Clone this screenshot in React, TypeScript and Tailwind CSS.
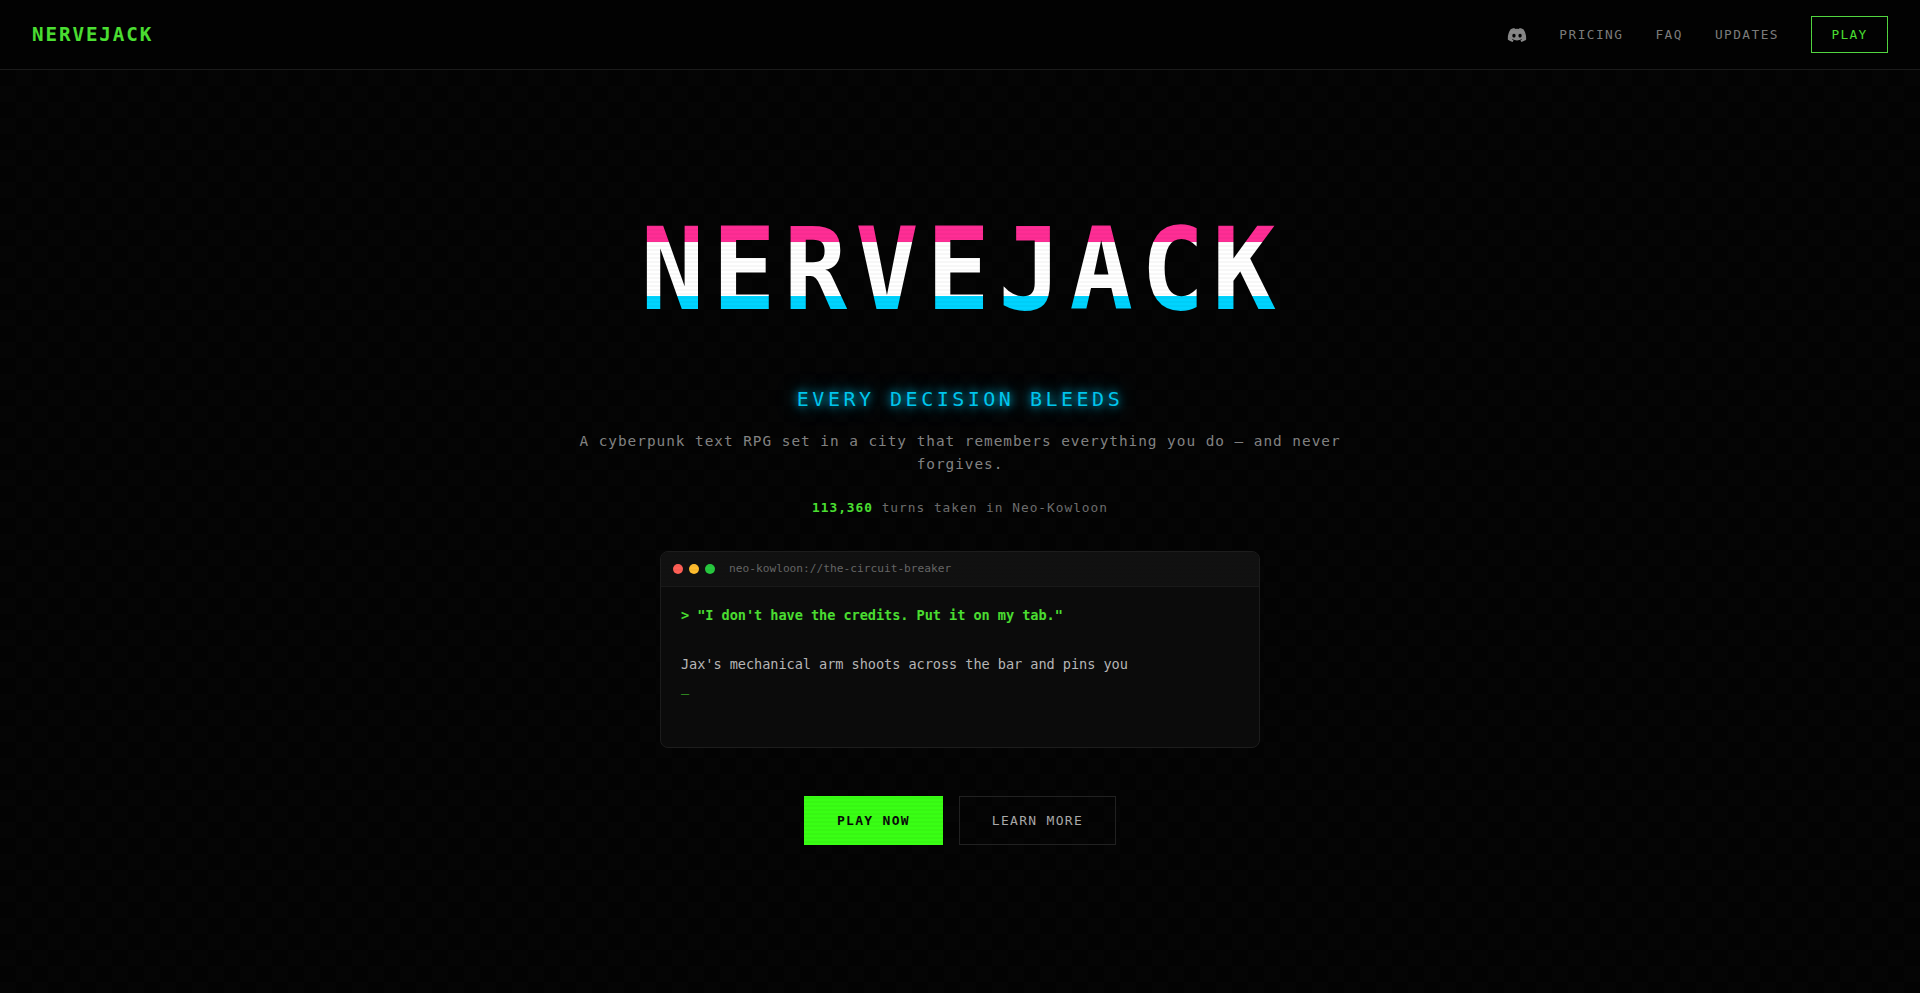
import { FaDiscord } from "react-icons/fa6";

export default function App() {
  return (
    <div className="relative h-[993px] overflow-hidden bg-[#030303] font-['DejaVu_Sans_Mono','Liberation_Mono',monospace] text-white">
      <nav className="flex h-[70px] items-center justify-between border-b border-[#1c1c1c] bg-[#020202] pl-8 pr-[32px]">
        <div className="pt-[2px] text-[19.2px] font-bold tracking-[0.1em] text-[#4be032]">NERVEJACK</div>
        <div className="flex items-center gap-8 text-[12.8px] tracking-[1.45px] text-[#7d7d7d]">
          <FaDiscord className="h-[20px] w-[20px] text-[#888888]" />
          <span>PRICING</span>
          <span>FAQ</span>
          <span>UPDATES</span>
          <span className="flex h-[37px] w-[77px] items-center justify-center border border-[#52d640] tracking-[0.1em] text-[#4be032]">
            PLAY
          </span>
        </div>
      </nav>

      <main className="flex h-[923px] flex-col items-center bg-[repeating-conic-gradient(#050505_0_25%,#030303_0_50%)] bg-[length:32px_32px] pt-[144px]">
        <h1 className="scale-x-[0.925] bg-[linear-gradient(180deg,#ff2d95_0,#ff2d95_28px,#ffffff_28px,#ffffff_82px,#00d4ff_82px,#00d4ff_100%)] bg-clip-text pl-[6px] text-[114px] font-bold leading-[112px] tracking-[8.6px] text-transparent">
          NERVEJACK
        </h1>

        <p className="mt-[58px] text-[20px] leading-[30px] tracking-[3.5px] text-[#00c8f0] [text-shadow:0_0_10px_#00d4ff,0_0_20px_rgba(0,212,255,0.5)]">
          EVERY DECISION BLEEDS
        </p>

        <p className="mt-[16px] w-[800px] text-center text-[14.4px] leading-[23px] tracking-[0.97px] text-[#848484]">
          A cyberpunk text RPG set in a city that remembers everything you do — and never forgives.
        </p>

        <p className="mt-[22px] text-[12.8px] leading-[20px] tracking-[1px] text-[#6e6e6e]">
          <span className="font-bold text-[#4be032]">113,360</span> turns taken in Neo-Kowloon
        </p>

        <section className="mt-[33px] h-[197px] w-[600px] overflow-hidden rounded-lg border border-[#1d1d1d] bg-[#0b0b0b]">
          <header className="flex h-[35px] items-center gap-[6px] border-b border-[#1a1a1a] bg-[#111111] px-3">
            <span className="h-2.5 w-2.5 rounded-full bg-[#ff5f56]" />
            <span className="h-2.5 w-2.5 rounded-full bg-[#ffbd2e]" />
            <span className="h-2.5 w-2.5 rounded-full bg-[#27c93f]" />
            <span className="ml-[8px] text-[11.2px] text-[#666666]">neo-kowloon://the-circuit-breaker</span>
          </header>
          <div className="px-5 py-4 text-[13.6px] leading-[24.5px] tracking-[-0.06px]">
            <div className="font-bold text-[#4be032]">&gt; "I don't have the credits. Put it on my tab."</div>
            <div className="h-[24.5px]" />
            <div className="text-[#b8b8b8]">Jax's mechanical arm shoots across the bar and pins you</div>
            <div className="-mt-[3px] text-[#4be032]">_</div>
          </div>
        </section>

        <div className="mt-[48px] flex gap-4">
          <button className="h-[49px] w-[139px] bg-[#39ff14] text-[13px] font-bold tracking-[1.3px] text-[#0a0a0a]">
            PLAY NOW
          </button>
          <button className="h-[49px] w-[157px] border border-[#222222] text-[13px] tracking-[1.3px] text-[#aaaaaa]">
            LEARN MORE
          </button>
        </div>
      </main>

      <div className="pointer-events-none absolute inset-0 bg-[repeating-linear-gradient(0deg,transparent_0,transparent_2px,rgba(0,0,0,0.03)_2px,rgba(0,0,0,0.03)_4px)]" />
    </div>
  );
}
